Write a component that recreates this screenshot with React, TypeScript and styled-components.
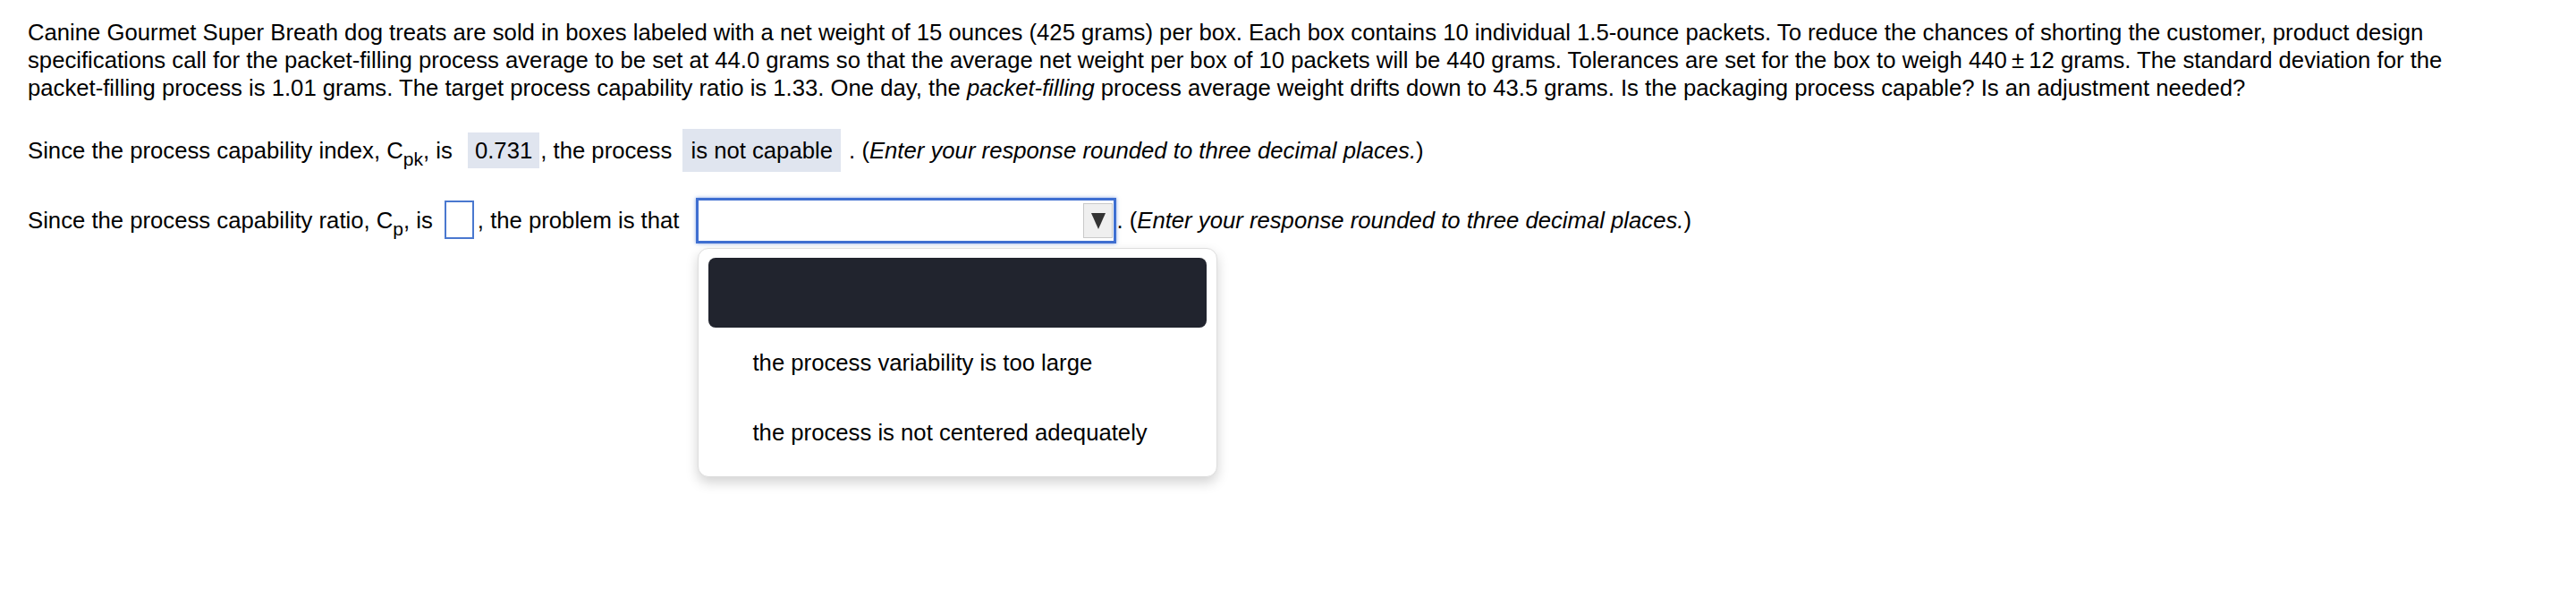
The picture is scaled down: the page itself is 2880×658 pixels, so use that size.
import React from "react";
import styled, { createGlobalStyle } from "styled-components";

const Global = createGlobalStyle`
  html, body, #root { margin: 0; padding: 0; background: #ffffff; min-height: 100%; }
  html, body { height: 100%; }
  body { font-family: "Liberation Sans", Arial, sans-serif; color: #000; }
`;

const Page = styled.main`
  box-sizing: border-box;
  min-height: 100vh;
  display: flex;
  flex-direction: column;
  align-items: flex-start;
  gap: 29px;
  padding: 21px 80px 0 31px;
  font-size: 25.7px;
  line-height: 31px;
`;

const Question = styled.p`
  margin: 0 0 1px 0;
`;

const AnswerLine = styled.div`
  white-space: nowrap;
  line-height: 48px;
  height: 48px;
`;

const Sub = styled.span`
  display: inline-block;
  font-size: 21px;
  line-height: 1;
  vertical-align: -8px;
`;

const Filled = styled.span<{ $tall?: boolean }>`
  display: inline-block;
  background: #e0e5ef;
  padding: 0 ${(p) => (p.$tall ? 9 : 8)}px;
  height: ${(p) => (p.$tall ? 48 : 40)}px;
  line-height: ${(p) => (p.$tall ? 48 : 40)}px;
  margin: 0 ${(p) => (p.$tall ? 2 : 1)}px 0 ${(p) => (p.$tall ? 5 : 10)}px;
`;

const Hint = styled.span`
  font-style: italic;
`;

const NumberBox = styled.span`
  display: inline-block;
  vertical-align: -12px;
  box-sizing: border-box;
  width: 33px;
  height: 43px;
  border: 2px solid #4a78cf;
  margin: 0 4px 0 13px;
  background: #fff;
`;

const SelectWrap = styled.div`
  position: relative;
  display: inline-block;
  vertical-align: -3px;
  margin-left: 19px;
`;

const SelectBox = styled.div`
  display: flex;
  justify-content: flex-end;
  align-items: center;
  box-sizing: border-box;
  width: 470px;
  height: 51px;
  border: 3px solid #3f6fd1;
  box-shadow: 0 0 4px rgba(63, 111, 209, 0.6);
  background: #fff;
  padding-right: 1px;
`;

const ArrowButton = styled.div`
  display: flex;
  align-items: center;
  justify-content: center;
  box-sizing: border-box;
  width: 33px;
  height: 39px;
  background: #efefef;
  border: 1px solid #c9c9c9;
`;

const Menu = styled.div`
  position: absolute;
  top: calc(100% + 5px);
  left: 2px;
  width: 581px;
  box-sizing: border-box;
  display: flex;
  flex-direction: column;
  padding: 10px 11px;
  background: #fff;
  border: 1px solid #dedede;
  border-radius: 12px;
  box-shadow: 0 6px 14px rgba(0, 0, 0, 0.18);
  z-index: 2;
  line-height: 31px;
`;

const MenuItem = styled.div<{ $active?: boolean }>`
  height: 78px;
  display: flex;
  align-items: center;
  padding-left: 49px;
  border-radius: 8px;
  background: ${(p) => (p.$active ? "#21242e" : "transparent")};
  color: ${(p) => (p.$active ? "#fff" : "#000")};
  white-space: nowrap;
`;

function Arrow() {
  return (
    <svg width="18" height="22" viewBox="0 0 18 22">
      <polygon points="1,2 17,2 9,20" fill="#333" />
    </svg>
  );
}

export default function App() {
  return (
    <>
      <Global />
      <Page>
        <Question>
          Canine Gourmet Super Breath dog treats are sold in boxes labeled with a net weight of 15 ounces (425 grams) per
          box. Each box contains 10 individual 1.5-ounce packets. To reduce the chances of shorting the customer, product
          design specifications call for the packet-filling process average to be set at 44.0 grams so that the average net
          weight per box of 10 packets will be 440 grams. Tolerances are set for the box to weigh 440{"\u2009"}±{"\u2009"}12 grams. The
          standard deviation for the packet-filling process is 1.01 grams. The target process capability ratio is 1.33. One
          day, the <i>packet-filling</i> process average weight drifts down to 43.5 grams. Is the packaging process capable? Is
          an adjustment needed?
        </Question>
        <AnswerLine>
          Since the process capability index, C<Sub>pk</Sub>, is <Filled>0.731</Filled>, the process{" "}
          <Filled $tall>is not capable</Filled> . (<Hint>Enter your response rounded to three decimal places.</Hint>)
        </AnswerLine>
        <AnswerLine>
          Since the process capability ratio, C<Sub>p</Sub>, is<NumberBox />, the problem is that
          <SelectWrap>
            <SelectBox>
              <ArrowButton>
                <Arrow />
              </ArrowButton>
            </SelectBox>
            <Menu role="listbox">
              <MenuItem $active role="option">{"\u00a0"}</MenuItem>
              <MenuItem role="option">the process variability is too large</MenuItem>
              <MenuItem role="option">the process is not centered adequately</MenuItem>
            </Menu>
          </SelectWrap>
          . (<Hint>Enter your response rounded to three decimal places.</Hint>)
        </AnswerLine>
      </Page>
    </>
  );
}
